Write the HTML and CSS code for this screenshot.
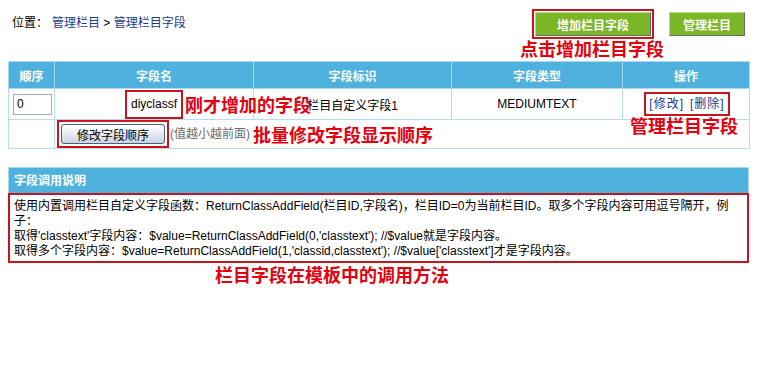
FILE: index.html
```html
<!DOCTYPE html>
<html lang="zh-CN">
<head>
<meta charset="utf-8">
<title>管理栏目字段</title>
<link rel="stylesheet" href="styles.css">
</head>
<body>
<div class="page">
  <div class="top">
    <div class="crumb">位置：<a class="first" href="#">管理栏目</a> &gt; <a href="#">管理栏目字段</a></div>
    <div class="actions">
      <span class="mark mark-btn"><button class="gbtn gbtn-wide">增加栏目字段</button></span>
      <button class="gbtn gbtn-narrow">管理栏目</button>
    </div>
    <div class="note note-add">点击增加栏目字段</div>
  </div>

  <div class="grid-wrap">
    <table class="grid">
      <colgroup>
        <col class="c1"><col class="c2"><col class="c3"><col class="c4"><col class="c5">
      </colgroup>
      <tr class="head">
        <th>顺序</th><th>字段名</th><th>字段标识</th><th>字段类型</th><th>操作</th>
      </tr>
      <tr class="row1">
        <td class="left"><input class="order" type="text" value="0"></td>
        <td><span class="mark mark-name">diyclassf</span></td>
        <td>栏目自定义字段1</td>
        <td>MEDIUMTEXT</td>
        <td><span class="mark mark-ops"><a href="#">[修改]</a><a class="op2" href="#">[删除]</a></span></td>
      </tr>
      <tr class="row2">
        <td></td>
        <td colspan="4" class="left tools">
          <span class="mark mark-sort"><button class="xbtn">修改字段顺序</button></span><span class="hint">(值越小越前面)</span><span class="note note-inline">批量修改字段显示顺序</span>
        </td>
      </tr>
    </table>
    <div class="note note-new">刚才增加的字段</div>
    <div class="note note-manage">管理栏目字段</div>
  </div>

  <div class="doc">
    <div class="doc-head">字段调用说明</div>
    <div class="doc-body">
      <div class="line">使用内置调用栏目自定义字段函数：ReturnClassAddField(栏目ID,字段名)，栏目ID=0为当前栏目ID。取多个字段内容可用逗号隔开，例</div>
      <div class="line">子：</div>
      <div class="line">取得'classtext'字段内容：$value=ReturnClassAddField(0,'classtext'); //$value就是字段内容。</div>
      <div class="line">取得多个字段内容：$value=ReturnClassAddField(1,'classid,classtext'); //$value['classtext']才是字段内容。</div>
    </div>
  </div>

  <div class="note note-doc">栏目字段在模板中的调用方法</div>
</div>
</body>
</html>
```

FILE: styles.css
```css
html, body {
  margin: 0;
  padding: 0;
  background: #ffffff;
}
body {
  font-family: "Liberation Sans", "Noto Sans CJK SC", sans-serif;
  font-size: 12px;
  color: #000;
}
a {
  color: #1a3b8b;
  text-decoration: none;
}
.page {
  width: 761px;
  position: relative;
}

/* top bar */
.top {
  position: relative;
  height: 61px;
  display: flex;
  justify-content: space-between;
  align-items: flex-start;
  padding: 0 16px 0 12px;
  box-sizing: border-box;
}
.crumb {
  margin-top: 16px;
  line-height: 14px;
}
.crumb .first { margin-left: 4px; }
.actions {
  margin-top: 9px;
  display: flex;
  align-items: flex-start;
  gap: 15px;
}
.mark {
  border: 2px solid #c4161c;
  display: inline-block;
  box-sizing: border-box;
}
.mark-btn {
  padding: 1px;
  line-height: 0;
}
.gbtn {
  height: 24px;
  background: #7ab626;
  color: #fff;
  font-family: "Liberation Sans", "Noto Sans CJK SC", sans-serif;
  font-size: 12px;
  font-weight: bold;
  border: 1px solid;
  border-color: #b8da8a #6b6b6b #6b6b6b #b8da8a;
  padding: 0;
  margin: 0;
}
.gbtn-wide { width: 116px; }
.gbtn-narrow { width: 76px; margin-top: 3px; }

.note {
  color: #e3000f;
  font-family: "Noto Sans CJK SC", sans-serif;
  font-weight: bold;
  font-size: 18px;
  line-height: 20px;
  white-space: nowrap;
}
.note-add {
  position: absolute;
  left: 520px;
  top: 38px;
}

/* grid table */
.grid-wrap {
  position: relative;
  margin-left: 8px;
  width: 741px;
}
.grid {
  border-collapse: collapse;
  width: 741px;
  table-layout: fixed;
  border: 1px solid #87c4e4;
}
.c1 { width: 46px; }
.c2 { width: 199px; }
.c3 { width: 198px; }
.c4 { width: 171px; }
.c5 { width: 127px; }
.grid th, .grid td {
  border: 1px solid #b5dcf0;
  padding: 0;
  text-align: center;
  white-space: nowrap;
}
.grid .head th {
  background: #4fb2de;
  color: #fff;
  font-weight: bold;
  height: 26px;
  border-color: #a9d8f0;
}
.grid .row1 td { height: 28px; }
.grid .row2 td { height: 28px; line-height: 0; }
.grid td.left {
  text-align: left;
  padding-left: 4px;
}
.grid td.tools { padding-left: 2px; }
.order {
  width: 39px;
  height: 21px;
  box-sizing: border-box;
  border: 1px solid #a5acb2;
  font-family: "Liberation Sans", sans-serif;
  font-size: 12px;
  padding: 0 3px;
  margin: 0;
  vertical-align: middle;
}
.mark-name {
  padding: 4px 4px;
  line-height: 17px;
  margin-top: 1px;
}
.mark-ops {
  padding: 2px 3px;
  line-height: 16px;
  margin-left: 2px;
}
.mark-ops a { letter-spacing: 1px; }
.mark-ops .op2 { margin-left: 6px; }
.mark-sort {
  padding: 2px 2px;
  line-height: 0;
  vertical-align: middle;
}
.xbtn {
  width: 104px;
  height: 20px;
  padding: 0;
  margin: 0;
  font-family: "Liberation Sans", "Noto Sans CJK SC", sans-serif;
  font-size: 12px;
  color: #000;
  border: 1px solid #4a5f7e;
  border-radius: 3px;
  background: linear-gradient(#ffffff, #e6eaf1 50%, #c9d2e0);
}
.hint {
  color: #6b6b6b;
  margin-left: 1px;
  vertical-align: middle;
  line-height: 14px;
}
.note-inline {
  margin-left: 3px;
  vertical-align: middle;
}
.note-new {
  position: absolute;
  left: 177px;
  top: 33px;
}
.note-manage {
  position: absolute;
  left: 622px;
  top: 54px;
}

/* doc box */
.doc {
  margin: 18px 0 0 8px;
  width: 741px;
}
.doc-head {
  height: 26px;
  line-height: 26px;
  background: #4fb2de;
  color: #fff;
  font-weight: bold;
  padding-left: 5px;
  border: 1px solid #a9d8f0;
  border-bottom: 0;
  box-sizing: border-box;
}
.doc-body {
  border: 2px solid #c4161c;
  padding: 4px 4px 2px 4px;
  line-height: 15px;
}
.line {
  white-space: nowrap;
}
.note-doc {
  margin: 1px 0 0 215px;
}
```
